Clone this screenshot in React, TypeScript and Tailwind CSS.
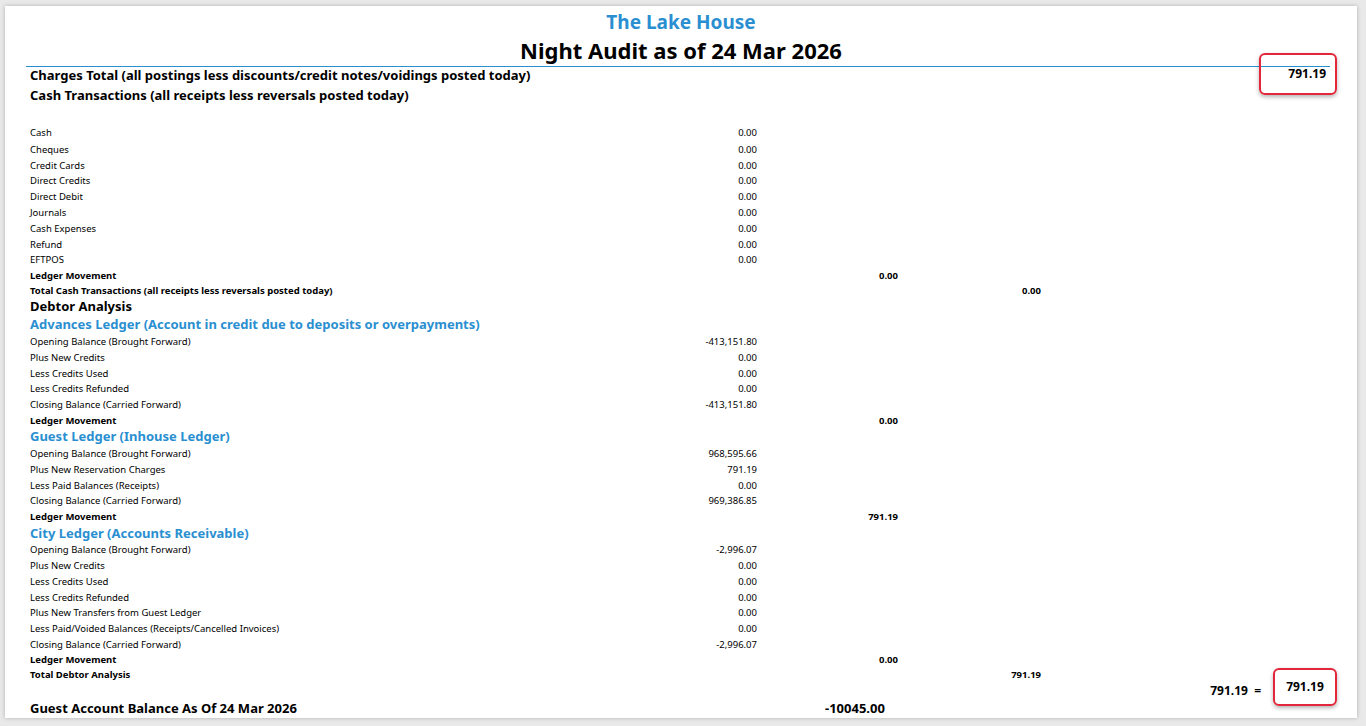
const F = "font-['Liberation_Sans',Arial,sans-serif]";

type Row = { label: string; v1?: string; v2?: string; v3?: string; bold?: boolean; h?: string };

function Line({ label, v1, v2, v3, bold, h = "h-[15.8px]" }: Row) {
  return (
    <div className={`flex items-center ${h} text-[9.5px] ${bold ? "font-bold" : ""}`}>
      <div className="w-[727px] flex justify-between">
        <span>{label}</span>
        <span>{v1}</span>
      </div>
      <div className="w-[141px] text-right font-bold">{v2}</div>
      <div className="w-[143px] text-right font-bold">{v3}</div>
    </div>
  );
}

function Heading({ children, blue, size = "text-[13px]", h = "h-[18px]" }: { children: React.ReactNode; blue?: boolean; size?: string; h?: string }) {
  return (
    <div className={`flex items-center ${h} ${size} font-bold ${blue ? "text-[#2a8fd1]" : "text-black"}`}>{children}</div>
  );
}

export default function App() {
  return (
    <div className={`${F} w-[1366px] h-[726px] bg-[#e9e9e9] pt-[6px] pl-[5px] text-black`}>
      <div className="w-[1352px] h-[712px] bg-white shadow-[0_0_4px_rgba(0,0,0,0.25)] relative">
        <div className="text-center text-[19px] font-bold text-[#2a8fd1] pt-[4px] leading-[24px]">The Lake House</div>
        <div className="text-center text-[22px] font-bold leading-[32px]">Night Audit as of 24 Mar 2026</div>
        <div className="ml-[21px] w-[1304px] border-t border-[#2a8fd1]" />

        <div className="pl-[25px]">
          <div className="flex items-center h-[18px] text-[13px] font-bold">
            <span className="flex-1">Charges Total (all postings less discounts/credit notes/voidings posted today)</span>
          </div>
          <Heading h="h-[22px]">Cash Transactions (all receipts less reversals posted today)</Heading>
          <div className="h-[18px]" />
          <Line label="Cash" v1="0.00" h="h-[17px]" />
          <Line label="Cheques" v1="0.00" />
          <Line label="Credit Cards" v1="0.00" />
          <Line label="Direct Credits" v1="0.00" />
          <Line label="Direct Debit" v1="0.00" />
          <Line label="Journals" v1="0.00" />
          <Line label="Cash Expenses" v1="0.00" />
          <Line label="Refund" v1="0.00" />
          <Line label="EFTPOS" v1="0.00" />
          <Line label="Ledger Movement" v2="0.00" bold />
          <Line label="Total Cash Transactions (all receipts less reversals posted today)" v3="0.00" bold h="h-[14px]" />
          <Heading h="h-[18px]">Debtor Analysis</Heading>
          <Heading blue h="h-[18px]">Advances Ledger (Account in credit due to deposits or overpayments)</Heading>
          <Line label="Opening Balance (Brought Forward)" v1="-413,151.80" />
          <Line label="Plus New Credits" v1="0.00" />
          <Line label="Less Credits Used" v1="0.00" />
          <Line label="Less Credits Refunded" v1="0.00" />
          <Line label="Closing Balance (Carried Forward)" v1="-413,151.80" />
          <Line label="Ledger Movement" v2="0.00" bold h="h-[15px]" />
          <Heading blue h="h-[18px]">Guest Ledger (Inhouse Ledger)</Heading>
          <Line label="Opening Balance (Brought Forward)" v1="968,595.66" />
          <Line label="Plus New Reservation Charges" v1="791.19" />
          <Line label="Less Paid Balances (Receipts)" v1="0.00" />
          <Line label="Closing Balance (Carried Forward)" v1="969,386.85" />
          <Line label="Ledger Movement" v2="791.19" bold h="h-[15px]" />
          <Heading blue h="h-[18px]">City Ledger (Accounts Receivable)</Heading>
          <Line label="Opening Balance (Brought Forward)" v1="-2,996.07" />
          <Line label="Plus New Credits" v1="0.00" />
          <Line label="Less Credits Used" v1="0.00" />
          <Line label="Less Credits Refunded" v1="0.00" />
          <Line label="Plus New Transfers from Guest Ledger" v1="0.00" />
          <Line label="Less Paid/Voided Balances (Receipts/Cancelled Invoices)" v1="0.00" />
          <Line label="Closing Balance (Carried Forward)" v1="-2,996.07" />
          <Line label="Ledger Movement" v2="0.00" bold h="h-[15px]" />
          <Line label="Total Debtor Analysis" v3="791.19" bold h="h-[15px]" />
          <div className="flex items-center justify-end h-[17px] text-[12px] font-bold pr-[96px]">791.19&nbsp;&nbsp;=</div>
          <div className="flex items-center h-[18px] text-[13px] font-bold">
            <span className="w-[795px]">Guest Account Balance As Of 24 Mar 2026</span>
            <span>-10045.00</span>
          </div>
        </div>

        <div className="absolute left-[1254px] top-[47px] w-[78px] h-[42px] border-2 border-[#e3263a] rounded-[6px] shadow-[0_2px_4px_rgba(0,0,0,0.3)] flex items-center justify-end pr-[9px] text-[12px] font-bold">791.19</div>
        <div className="absolute left-[1268px] top-[662px] w-[64px] h-[38px] border-2 border-[#e3263a] rounded-[6px] shadow-[0_2px_4px_rgba(0,0,0,0.3)] flex items-center justify-center text-[12px] font-bold">791.19</div>
      </div>
    </div>
  );
}
